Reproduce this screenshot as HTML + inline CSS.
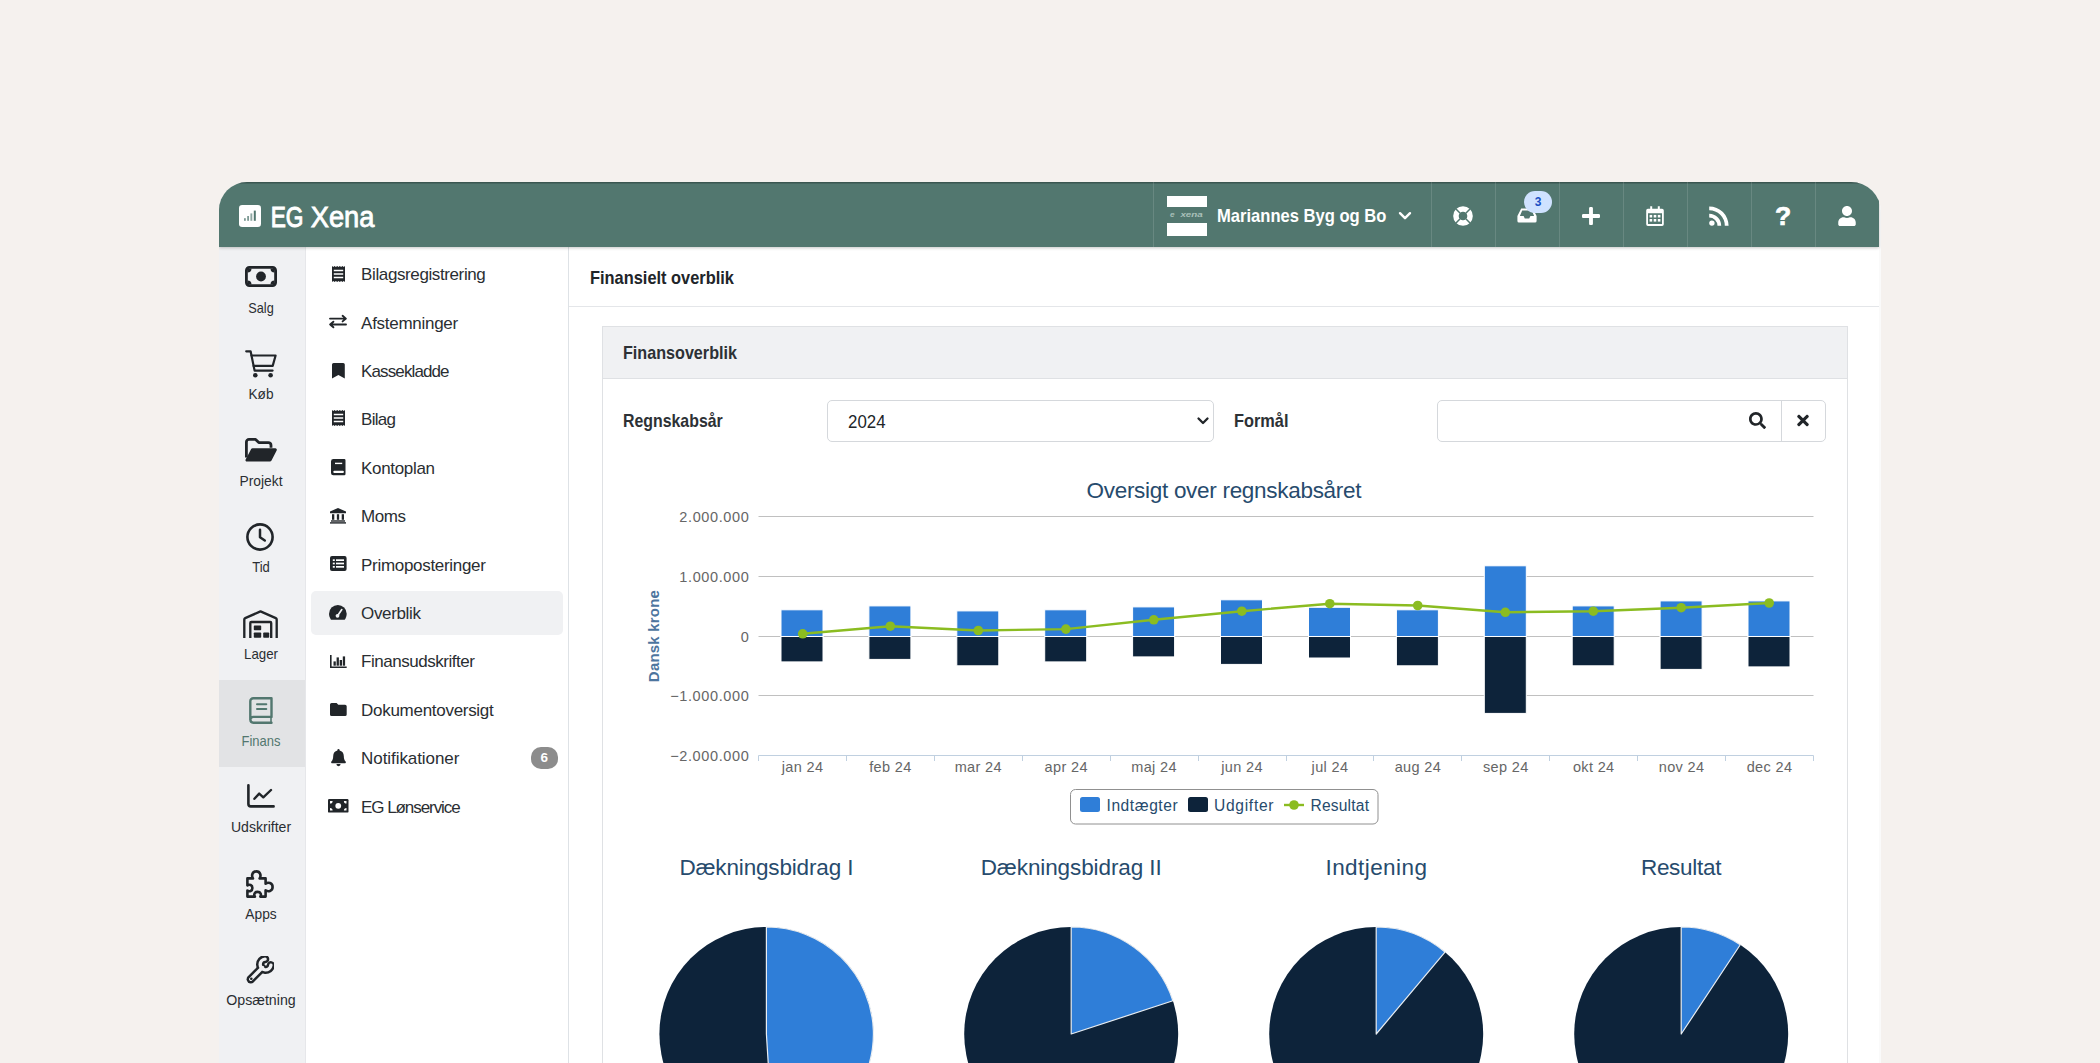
<!DOCTYPE html>
<html lang="da">
<head>
<meta charset="utf-8">
<title>EG Xena - Finansielt overblik</title>
<style>
*{box-sizing:border-box;margin:0;padding:0}
html,body{width:2100px;height:1063px;overflow:hidden}
body{background:#f5f1ee;font-family:"Liberation Sans",sans-serif;color:#212529;position:relative}
.abs{position:absolute}
#win{position:absolute;left:219px;top:182px;width:1662px;height:900px;background:#fff;border-radius:28px 30px 0 0;overflow:hidden}
#hdr{position:absolute;left:0;top:0;width:1660px;height:65px;background:#52776f;box-shadow:0 1px 3px rgba(0,0,0,.22), inset 0 1.500px 0 rgba(20,35,32,.38);z-index:5}
#strip{position:absolute;left:1660px;top:0;width:2px;height:900px;background:#fafafa}
.sep{position:absolute;top:0;width:1px;height:65px;background:rgba(255,255,255,.13)}
.hico{position:absolute;fill:#fff}
#side{position:absolute;left:0;top:65px;width:85.500px;height:840px;background:#f0f1f3}
.sitem{position:absolute;left:-.8px;width:86.500px;height:87px;text-align:center}
.sitem .lbl{position:absolute;left:-10px;width:106px;top:52.600px;font-size:14.800px;line-height:17px;color:#2a2e32;text-align:center}
.sitem svg{position:absolute}
.sitem.act{background:#e2e3e5}
.sitem.act .lbl{color:#52776f}
#sub{position:absolute;left:85.500px;top:65px;width:264.500px;height:840px;background:#fff;border-right:1px solid #dee2e6;border-left:1.500px solid #e6e7ea}
.mi{position:absolute;left:0;width:262px;height:44px}
.mi .t{position:absolute;left:55.600px;top:13.250px;font-size:17px;letter-spacing:-.4px;line-height:20px;white-space:nowrap;color:#2a2e32}
.mi svg{position:absolute;overflow:visible}
#main{position:absolute;left:350px;top:65px;width:1310px;height:840px;background:#fff}
.b{font-weight:700;color:#2d3135}
</style>
</head>
<body>
<div id="win">
  <div id="strip"></div>
  <div id="side">
<div class="sitem" style="top:0.0px"><svg style="left:26.5px;top:19px" width="32" height="21" viewBox="0 0 32 21"><rect x="1.400" y="1.400" width="29.200" height="18.200" rx="3" fill="none" stroke="#212529" stroke-width="2.800"/><circle cx="16" cy="10.5" r="4.9" fill="#212529"/><path d="M2.500 2.500 h4 a4 4 0 0 1 -4 4 z M29.500 2.500 h-4 a4 4 0 0 0 4 4 z M2.500 18.500 h4 a4 4 0 0 0 -4 -4 z M29.500 18.500 h-4 a4 4 0 0 1 4 -4 z" fill="#212529"/></svg><div class="lbl" style="transform:scaleX(0.859)">Salg</div></div>
<div class="sitem" style="top:86.6px"><svg style="left:26.500px;top:16.400px" width="32" height="28" viewBox="0 0 32 28"><g fill="none" stroke="#212529" stroke-width="2.200" stroke-linecap="round" stroke-linejoin="round"><path d="M1.200 1.300 H5.600 L9.600 20.600 H27.600"/><path d="M6.500 5.500 H30.600 L27.700 15.900 H8.600"/></g><circle cx="10.300" cy="25.200" r="2.300" fill="#212529"/><circle cx="25.600" cy="25.200" r="2.300" fill="#212529"/></svg><div class="lbl" style="transform:scaleX(0.922)">Køb</div></div>
<div class="sitem" style="top:173.2px"><svg style="left:26.500px;top:17.800px" width="32" height="24" viewBox="0 0 32 24"><path d="M1.400 19.500 V4 a2.600 2.600 0 0 1 2.600 -2.600 h6.600 l3.200 3.200 h9.600 a2.600 2.600 0 0 1 2.600 2.600 v2.600" fill="none" stroke="#212529" stroke-width="2.800" stroke-linejoin="round"/><path d="M7.800 10.300 H30.300 a1.500 1.500 0 0 1 1.350 2.200 L26.500 22.600 a1.800 1.800 0 0 1 -1.600 1 H2 a1.500 1.500 0 0 1 -1.350 -2.200 L5.900 11.400 a2 2 0 0 1 1.900 -1.100 z" fill="#212529"/></svg><div class="lbl" style="transform:scaleX(0.934)">Projekt</div></div>
<div class="sitem" style="top:259.8px"><svg style="left:28px;top:16px" width="28" height="28" viewBox="0 0 28 28"><circle cx="14" cy="14" r="12.600" fill="none" stroke="#212529" stroke-width="2.600"/><path d="M14 6.800 V14.300 L18.800 17.500" fill="none" stroke="#212529" stroke-width="2.500" stroke-linecap="round" stroke-linejoin="round"/></svg><div class="lbl" style="transform:scaleX(0.881)">Tid</div></div>
<div class="sitem" style="top:346.4px"><svg style="left:24.500px;top:16.200px" width="35" height="28" viewBox="0 0 35 28"><g fill="none" stroke="#212529" stroke-width="2.350" stroke-linejoin="round"><path d="M1.300 28 V9.500 a1.500 1.500 0 0 1 .9 -1.400 L17.500 1.400 L32.800 8.100 a1.500 1.500 0 0 1 .9 1.400 V28"/><path d="M7.300 28 V13 a1 1 0 0 1 1 -1 H27.200 a1 1 0 0 1 1 1 V28"/></g><g fill="#212529"><rect x="10.800" y="15.600" width="7.400" height="4.600" rx=".8"/><rect x="10.800" y="22.500" width="7.400" height="5.200" rx=".8"/><rect x="20.200" y="22.500" width="6" height="5.200" rx=".8"/></g></svg><div class="lbl" style="transform:scaleX(0.898)">Lager</div></div>
<div class="sitem act" style="top:433.0px"><svg style="left:30.400px;top:16.600px" width="24" height="27" viewBox="0 0 24 27"><g fill="none" stroke="#52776f" stroke-width="2.400" stroke-linejoin="round" stroke-linecap="round"><path d="M1.300 22.700 V4.300 a3 3 0 0 1 3 -3 H22.500 V19.900 H4.300 a2.900 2.900 0 0 0 0 5.800 H22.500"/><path d="M22 20 V25" stroke-width="1.600"/></g><g stroke="#52776f" stroke-width="2" stroke-linecap="round"><path d="M8 7.300 H17.300 M8 11.900 H17.300"/></g></svg><div class="lbl" style="transform:scaleX(0.878)">Finans</div></div>
<div class="sitem" style="top:519.6px"><svg style="left:28.400px;top:17.700px" width="28" height="24" viewBox="0 0 28 24"><g fill="none" stroke="#212529" stroke-linecap="round" stroke-linejoin="round"><path d="M1.400 1.300 V20 a2.400 2.400 0 0 0 2.400 2.400 H26.600" stroke-width="2.600"/><path d="M7.400 14.800 L12.200 9.600 L16.300 13.300 L24 6" stroke-width="2.400"/></g></svg><div class="lbl" style="transform:scaleX(0.95)">Udskrifter</div></div>
<div class="sitem" style="top:606.2px"><svg style="left:28px;top:16.700px" width="28" height="28" viewBox="0 0 28 28"><path d="M1.400 8.400 H7 C5.300 6 6 1.400 10.300 1.400 C14.600 1.400 15.300 6 13.600 8.400 H19.600 V13.700 C22 12 26.600 12.700 26.600 17 C26.600 21.300 22 22 19.600 20.300 V26.600 H14.300 C15.600 24.600 14.800 21.900 11.600 21.900 C8.400 21.900 7.600 24.600 8.900 26.600 H1.400 V20.600 C3.400 21.900 6.400 21.100 6.400 18 C6.400 14.900 3.400 14.100 1.400 15.400 Z" fill="none" stroke="#212529" stroke-width="2.600" stroke-linejoin="round"/></svg><div class="lbl" style="transform:scaleX(0.931)">Apps</div></div>
<div class="sitem" style="top:692.8px"><svg style="left:28px;top:16.500px" width="28" height="28" viewBox="0 0 28 28"><g fill="none" stroke-linecap="round" stroke-linejoin="round"><path d="M24.900 9.300 A5.400 5.400 0 1 1 19.100 3.100" stroke="#212529" stroke-width="8.400"/><path d="M16 12 L4.800 23.200" stroke="#212529" stroke-width="8.400"/><path d="M24.900 9.300 A5.400 5.400 0 1 1 19.100 3.100" stroke="#f0f1f3" stroke-width="3.400"/><path d="M16.500 11.500 L4.800 23.200" stroke="#f0f1f3" stroke-width="3.400"/></g><circle cx="5.300" cy="22.700" r="1.300" fill="#212529"/></svg><div class="lbl" style="transform:scaleX(0.959)">Opsætning</div></div>
</div>
  <div id="sub">
<div class="abs" style="left:5px;top:344px;width:252px;height:44px;background:#f0f1f3;border-radius:5px"></div>
<div class="mi" style="top:5.0px"><svg style="left:26.2px;top:14.4px;width:13px;height:16px" viewBox="0 0 13 16"><path d="M0 0 L0.0 0 L1.3 1.1 L2.6 0 L3.9 1.1 L5.2 0 L6.5 1.1 L7.8 0 L9.1 1.1 L10.4 0 L11.7 1.1 L13 0 L13 16 L11.7 14.9 L10.4 16 L9.1 14.9 L7.8 16 L6.5 14.9 L5.2 16 L3.9 14.9 L2.6 16 L1.3 14.9 L0.0 16 Z" fill="#212529"/><path d="M1.800 4.600 H11.200 M1.800 8 H11.200 M1.800 11.400 H11.200" stroke="#fff" stroke-width="1.500"/></svg><div class="t" style="letter-spacing:-0.39px">Bilagsregistrering</div></div>
<div class="mi" style="top:53.4px"><svg style="left:23.5px;top:15.1px;width:18px;height:13px" viewBox="0 0 18 13"><g fill="none" stroke="#212529" stroke-width="1.900" stroke-linecap="round" stroke-linejoin="round"><path d="M1 3.600 H16.800 M13.600 0.800 L16.900 3.600 L13.600 6.400"/><path d="M17 9.500 H1.200 M4.400 6.700 L1.100 9.500 L4.400 12.300"/></g></svg><div class="t" style="letter-spacing:-0.28px">Afstemninger</div></div>
<div class="mi" style="top:101.8px"><svg style="left:26.3px;top:13.9px;width:12.8px;height:15.6px" viewBox="0 0 12.8 15.6"><path d="M0 1.600 a1.600 1.600 0 0 1 1.600 -1.600 h9.600 a1.600 1.600 0 0 1 1.600 1.600 V15.600 L6.400 11.900 L0 15.600 Z" fill="#212529"/></svg><div class="t" style="letter-spacing:-0.89px">Kassekladde</div></div>
<div class="mi" style="top:150.2px"><svg style="left:26.2px;top:12.8px;width:13px;height:16px" viewBox="0 0 13 16"><path d="M0 0 L0.0 0 L1.3 1.1 L2.6 0 L3.9 1.1 L5.2 0 L6.5 1.1 L7.8 0 L9.1 1.1 L10.4 0 L11.7 1.1 L13 0 L13 16 L11.7 14.9 L10.4 16 L9.1 14.9 L7.8 16 L6.5 14.9 L5.2 16 L3.9 14.9 L2.6 16 L1.3 14.9 L0.0 16 Z" fill="#212529"/><path d="M1.800 4.600 H11.200 M1.800 8 H11.200 M1.800 11.400 H11.200" stroke="#fff" stroke-width="1.500"/></svg><div class="t" style="letter-spacing:-0.74px">Bilag</div></div>
<div class="mi" style="top:198.6px"><svg style="left:25.5px;top:13.4px;width:14.5px;height:16.3px" viewBox="0 0 14.5 16.3"><path d="M0 2.400 a2.400 2.400 0 0 1 2.400 -2.400 H13.300 a1.200 1.200 0 0 1 1.200 1.200 V15.100 a1.200 1.200 0 0 1 -1.200 1.200 H2.400 a2.400 2.400 0 0 1 -2.400 -2.400 Z" fill="#212529"/><rect x="4" y="3.700" width="7.200" height="1.400" fill="#fff"/><rect x="2.300" y="11.700" width="10.600" height="2.300" rx="1" fill="#fff"/></svg><div class="t" style="letter-spacing:-0.33px">Kontoplan</div></div>
<div class="mi" style="top:247.0px"><svg style="left:24.4px;top:14.0px;width:16px;height:15.6px" viewBox="0 0 16 15.6"><path d="M8 0 L16 3.500 V5.200 H0 V3.500 Z" fill="#212529"/><g fill="#212529"><rect x="2" y="6.200" width="2.300" height="5.600"/><rect x="6.850" y="6.200" width="2.300" height="5.600"/><rect x="11.700" y="6.200" width="2.300" height="5.600"/><rect x="1" y="12.300" width="14" height="1.400"/><rect x="0" y="14.200" width="16" height="1.400"/></g></svg><div class="t" style="letter-spacing:-0.45px">Moms</div></div>
<div class="mi" style="top:295.4px"><svg style="left:24px;top:13.4px;width:16.6px;height:15px" viewBox="0 0 16.6 15"><rect x="0" y="0" width="16.600" height="15" rx="2" fill="#212529"/><g fill="#fff"><rect x="2.800" y="3.300" width="2" height="1.700"/><rect x="6" y="3.300" width="8" height="1.700"/><rect x="2.800" y="6.650" width="2" height="1.700"/><rect x="6" y="6.650" width="8" height="1.700"/><rect x="2.800" y="10" width="2" height="1.700"/><rect x="6" y="10" width="8" height="1.700"/></g></svg><div class="t" style="letter-spacing:-0.31px">Primoposteringer</div></div>
<div class="mi" style="top:343.8px"><svg style="left:23.6px;top:14.2px;width:17.7px;height:14.7px" viewBox="0 0 17.7 14.7"><path d="M0 8.850 a8.850 8.850 0 0 1 17.700 0 c0 2.100 -0.700 4.100 -1.800 5.600 a0.800 0.800 0 0 1 -0.600 0.300 H2.400 a0.800 0.800 0 0 1 -0.600 -0.300 C0.700 12.900 0 10.900 0 8.850 Z" fill="#212529"/><path d="M8.600 10.700 L12.800 4.600" stroke="#f0f1f3" stroke-width="1.700" stroke-linecap="round"/><circle cx="8.500" cy="10.800" r="1.900" fill="#f0f1f3"/></svg><div class="t" style="letter-spacing:-0.36px">Overblik</div></div>
<div class="mi" style="top:392.2px"><svg style="left:24px;top:15.4px;width:16.7px;height:13px" viewBox="0 0 16.7 13"><path d="M0.800 0 V12.200 H16.700" fill="none" stroke="#212529" stroke-width="1.600"/><g fill="#212529"><rect x="3.500" y="6.400" width="2.300" height="4.300"/><rect x="6.600" y="2.400" width="2.300" height="8.300"/><rect x="9.700" y="5" width="2.300" height="5.700"/><rect x="12.800" y="1.400" width="2.300" height="9.300"/></g></svg><div class="t" style="letter-spacing:-0.48px">Finansudskrifter</div></div>
<div class="mi" style="top:440.6px"><svg style="left:24px;top:15.4px;width:16.7px;height:13px" viewBox="0 0 16.7 13"><path d="M0 1.600 a1.600 1.600 0 0 1 1.600 -1.600 h5 l1.700 1.700 h6.800 a1.600 1.600 0 0 1 1.600 1.600 v8.100 a1.600 1.600 0 0 1 -1.600 1.600 h-13.500 a1.600 1.600 0 0 1 -1.600 -1.600 Z" fill="#212529"/></svg><div class="t" style="letter-spacing:-0.29px">Dokumentoversigt</div></div>
<div class="mi" style="top:489.0px"><svg style="left:25px;top:12.8px;width:15px;height:17.2px" viewBox="0 0 15 17.2"><path d="M7.500 0 a1.100 1.100 0 0 1 1.100 1.100 v0.500 c2.500 0.500 4.200 2.700 4.200 5.300 c0 3.200 0.900 4.600 1.800 5.600 c0.600 0.700 0.100 1.800 -0.800 1.800 H1.200 c-0.900 0 -1.400 -1.100 -0.800 -1.800 c0.900 -1 1.800 -2.400 1.800 -5.600 c0 -2.600 1.700 -4.800 4.200 -5.300 v-0.500 A1.100 1.100 0 0 1 7.500 0 Z M5.400 15.100 h4.200 a2.100 2.100 0 0 1 -4.200 0 Z" fill="#212529"/></svg><div class="t" style="letter-spacing:-0.07px">Notifikationer</div></div>
<div class="mi" style="top:537.4px"><svg style="left:22.2px;top:14.9px;width:20.5px;height:13.6px" viewBox="0 0 20.5 13.6"><rect x="0" y="0" width="20.500" height="13.600" rx="1.200" fill="#212529"/><circle cx="10.250" cy="6.800" r="2.900" fill="#fff"/><path d="M2 2 h2.600 a2.600 2.600 0 0 1 -2.600 2.600 z M18.500 2 h-2.600 a2.600 2.600 0 0 0 2.600 2.600 z M2 11.600 h2.600 a2.600 2.600 0 0 0 -2.600 -2.600 z M18.500 11.600 h-2.600 a2.600 2.600 0 0 1 2.600 -2.600 z" fill="#fff"/></svg><div class="t" style="letter-spacing:-1.07px">EG Lønservice</div></div>
<div class="abs b" style="left:225.500px;top:500px;width:26.500px;height:22.400px;border-radius:10px;background:#8c8c8c;color:#fff;font-size:13.500px;line-height:22.400px;text-align:center">6</div>
</div>
  <div id="main">
<div class="abs b" style="left:20.500px;top:20px;font-size:17.800px;line-height:22px;white-space:nowrap;color:#212529;transform:scaleX(0.922);transform-origin:0 50%">Finansielt overblik</div>
<div class="abs" style="left:0;top:59px;width:1310px;height:1px;background:#e4e6e9"></div>
<div class="abs" style="left:33px;top:79px;width:1245.500px;height:800px;border:1px solid #dfe1e4;background:#fff"></div>
<div class="abs" style="left:34px;top:80px;width:1243.500px;height:52px;background:#f0f1f3;border-bottom:1px solid #dfe1e4"></div>
<div class="abs b" style="left:54px;top:95px;font-size:17.800px;line-height:22px;white-space:nowrap;transform:scaleX(0.908);transform-origin:0 50%">Finansoverblik</div>
<div class="abs b" style="left:54px;top:163px;font-size:17.800px;line-height:22px;white-space:nowrap;transform:scaleX(0.893);transform-origin:0 50%">Regnskabsår</div>
<div class="abs" style="left:258px;top:152.500px;width:387px;height:42px;border:1px solid #d5d8dc;border-radius:5px;background:#fff"></div>
<div class="abs" style="left:278.5px;top:164px;font-size:18px;line-height:22px;color:#212529;transform:scaleX(.937);transform-origin:0 50%">2024</div>
<svg class="abs" style="left:627px;top:168px" width="14" height="12" viewBox="0 0 14 12"><path d="M2.500 3.500 L7 8 L11.500 3.500" fill="none" stroke="#212529" stroke-width="2.300" stroke-linecap="round" stroke-linejoin="round"/></svg>
<div class="abs b" style="left:664.5px;top:163px;font-size:17.800px;line-height:22px;white-space:nowrap;transform:scaleX(0.919);transform-origin:0 50%">Formål</div>
<div class="abs" style="left:868px;top:152.5px;width:389px;height:42px;border:1px solid #d5d8dc;border-radius:5px;background:#fff"></div>
<div class="abs" style="left:1212px;top:153px;width:1px;height:41px;background:#d5d8dc"></div>
<svg class="abs" style="left:1180px;top:164.5px" width="17" height="17" viewBox="0 0 512 512"><path d="M505 442.700L405.300 343c-4.500-4.500-10.600-7-17-7H372c27.600-35.300 44-79.700 44-128C416 93.100 322.900 0 208 0S0 93.100 0 208s93.100 208 208 208c48.300 0 92.700-16.400 128-44v16.300c0 6.400 2.500 12.500 7 17l99.700 99.700c9.400 9.400 24.600 9.400 33.900 0l28.300-28.300c9.400-9.400 9.400-24.600.1-34zM208 336c-70.700 0-128-57.200-128-128 0-70.700 57.200-128 128-128 70.700 0 128 57.200 128 128 0 70.700-57.200 128-128 128z" fill="#212529"/></svg>
<svg class="abs" style="left:1228px;top:164.5px" width="12" height="17" viewBox="0 0 352 512"><path d="M242.720 256l100.070-100.070c12.280-12.280 12.280-32.190 0-44.480l-22.240-22.240c-12.280-12.280-32.190-12.280-44.480 0L176 189.280 75.930 89.210c-12.280-12.280-32.190-12.280-44.480 0L9.210 111.450c-12.280 12.280-12.280 32.190 0 44.480L109.280 256 9.210 356.070c-12.280 12.280-12.280 32.190 0 44.480l22.240 22.240c12.280 12.280 32.200 12.280 44.480 0L176 322.720l100.070 100.070c12.280 12.280 32.200 12.280 44.480 0l22.240-22.240c12.280-12.280 12.280-32.190 0-44.480L242.720 256z" fill="#212529"/></svg>
<svg class="abs" style="left:0;top:0" width="1310" height="840" viewBox="569 247 1310 840" font-family="Liberation Sans, sans-serif">
<text x="1224" y="498" text-anchor="middle" font-size="22.500" fill="#274b6d" textLength="275" lengthAdjust="spacing">Oversigt over regnskabsåret</text>
<path d="M758.5 516.5 H1813.5" stroke="#c0c0c0" stroke-width="1"/>
<path d="M758.5 576.5 H1813.5" stroke="#c0c0c0" stroke-width="1"/>
<path d="M758.5 636.5 H1813.5" stroke="#c0c0c0" stroke-width="1"/>
<path d="M758.5 695.5 H1813.5" stroke="#c0c0c0" stroke-width="1"/>
<text x="749.400" y="521.5" text-anchor="end" font-size="14.500" fill="#666" letter-spacing=".62">2.000.000</text>
<text x="749.400" y="581.5" text-anchor="end" font-size="14.500" fill="#666" letter-spacing=".62">1.000.000</text>
<text x="749.400" y="641.5" text-anchor="end" font-size="14.500" fill="#666" letter-spacing=".62">0</text>
<text x="749.400" y="700.5" text-anchor="end" font-size="14.500" fill="#666" letter-spacing=".62">−1.000.000</text>
<text x="749.400" y="760.5" text-anchor="end" font-size="14.500" fill="#666" letter-spacing=".62">−2.000.000</text>
<text transform="translate(659,636) rotate(-90)" text-anchor="middle" font-size="15" font-weight="700" fill="#4d759e" letter-spacing=".2">Dansk krone</text>
<rect x="781.0" y="609.8" width="42" height="26.7" fill="#2f7ed8" stroke="#fff" stroke-width="1"/><rect x="781.0" y="636.5" width="42" height="25.4" fill="#0d233a" stroke="#fff" stroke-width="1"/>
<rect x="868.9" y="605.9" width="42" height="30.6" fill="#2f7ed8" stroke="#fff" stroke-width="1"/><rect x="868.9" y="636.5" width="42" height="22.9" fill="#0d233a" stroke="#fff" stroke-width="1"/>
<rect x="956.8" y="610.9" width="42" height="25.6" fill="#2f7ed8" stroke="#fff" stroke-width="1"/><rect x="956.8" y="636.5" width="42" height="29.3" fill="#0d233a" stroke="#fff" stroke-width="1"/>
<rect x="1044.7" y="609.8" width="42" height="26.7" fill="#2f7ed8" stroke="#fff" stroke-width="1"/><rect x="1044.7" y="636.5" width="42" height="25.4" fill="#0d233a" stroke="#fff" stroke-width="1"/>
<rect x="1132.6" y="606.9" width="42" height="29.6" fill="#2f7ed8" stroke="#fff" stroke-width="1"/><rect x="1132.6" y="636.5" width="42" height="20.4" fill="#0d233a" stroke="#fff" stroke-width="1"/>
<rect x="1220.5" y="599.8" width="42" height="36.7" fill="#2f7ed8" stroke="#fff" stroke-width="1"/><rect x="1220.5" y="636.5" width="42" height="27.9" fill="#0d233a" stroke="#fff" stroke-width="1"/>
<rect x="1308.5" y="607.3" width="42" height="29.2" fill="#2f7ed8" stroke="#fff" stroke-width="1"/><rect x="1308.5" y="636.5" width="42" height="21.5" fill="#0d233a" stroke="#fff" stroke-width="1"/>
<rect x="1396.4" y="609.8" width="42" height="26.7" fill="#2f7ed8" stroke="#fff" stroke-width="1"/><rect x="1396.4" y="636.5" width="42" height="29.3" fill="#0d233a" stroke="#fff" stroke-width="1"/>
<rect x="1484.3" y="565.8" width="42" height="70.7" fill="#2f7ed8" stroke="#fff" stroke-width="1"/><rect x="1484.3" y="636.5" width="42" height="76.9" fill="#0d233a" stroke="#fff" stroke-width="1"/>
<rect x="1572.2" y="605.9" width="42" height="30.6" fill="#2f7ed8" stroke="#fff" stroke-width="1"/><rect x="1572.2" y="636.5" width="42" height="29.3" fill="#0d233a" stroke="#fff" stroke-width="1"/>
<rect x="1660.1" y="600.9" width="42" height="35.6" fill="#2f7ed8" stroke="#fff" stroke-width="1"/><rect x="1660.1" y="636.5" width="42" height="32.9" fill="#0d233a" stroke="#fff" stroke-width="1"/>
<rect x="1748.0" y="600.9" width="42" height="35.6" fill="#2f7ed8" stroke="#fff" stroke-width="1"/><rect x="1748.0" y="636.5" width="42" height="30.4" fill="#0d233a" stroke="#fff" stroke-width="1"/>
<path d="M758.5 755.500 H1813.5" stroke="#c0d0e0" stroke-width="1"/>
<path d="M758.5 755.500 V761" stroke="#c0d0e0" stroke-width="1"/><path d="M846.5 755.500 V761" stroke="#c0d0e0" stroke-width="1"/><path d="M934.5 755.500 V761" stroke="#c0d0e0" stroke-width="1"/><path d="M1022.5 755.500 V761" stroke="#c0d0e0" stroke-width="1"/><path d="M1110.5 755.500 V761" stroke="#c0d0e0" stroke-width="1"/><path d="M1198.5 755.500 V761" stroke="#c0d0e0" stroke-width="1"/><path d="M1286.5 755.500 V761" stroke="#c0d0e0" stroke-width="1"/><path d="M1373.5 755.500 V761" stroke="#c0d0e0" stroke-width="1"/><path d="M1461.5 755.500 V761" stroke="#c0d0e0" stroke-width="1"/><path d="M1549.5 755.500 V761" stroke="#c0d0e0" stroke-width="1"/><path d="M1637.5 755.500 V761" stroke="#c0d0e0" stroke-width="1"/><path d="M1725.5 755.500 V761" stroke="#c0d0e0" stroke-width="1"/><path d="M1813.5 755.500 V761" stroke="#c0d0e0" stroke-width="1"/>
<text x="802.5" y="772" text-anchor="middle" font-size="14.500" fill="#666" letter-spacing=".35">jan 24</text><text x="890.4" y="772" text-anchor="middle" font-size="14.500" fill="#666" letter-spacing=".35">feb 24</text><text x="978.3" y="772" text-anchor="middle" font-size="14.500" fill="#666" letter-spacing=".35">mar 24</text><text x="1066.2" y="772" text-anchor="middle" font-size="14.500" fill="#666" letter-spacing=".35">apr 24</text><text x="1154.1" y="772" text-anchor="middle" font-size="14.500" fill="#666" letter-spacing=".35">maj 24</text><text x="1242.0" y="772" text-anchor="middle" font-size="14.500" fill="#666" letter-spacing=".35">jun 24</text><text x="1330.0" y="772" text-anchor="middle" font-size="14.500" fill="#666" letter-spacing=".35">jul 24</text><text x="1417.9" y="772" text-anchor="middle" font-size="14.500" fill="#666" letter-spacing=".35">aug 24</text><text x="1505.8" y="772" text-anchor="middle" font-size="14.500" fill="#666" letter-spacing=".35">sep 24</text><text x="1593.7" y="772" text-anchor="middle" font-size="14.500" fill="#666" letter-spacing=".35">okt 24</text><text x="1681.6" y="772" text-anchor="middle" font-size="14.500" fill="#666" letter-spacing=".35">nov 24</text><text x="1769.5" y="772" text-anchor="middle" font-size="14.500" fill="#666" letter-spacing=".35">dec 24</text>
<path d="M802.7 633.8 L890.3 626.2 L978.3 630.5 L1065.9 629.1 L1153.8 619.8 L1241.8 611.2 L1329.8 603.7 L1417.7 605.5 L1505.3 612.3 L1593.3 611.2 L1681.2 607.7 L1769.2 603" fill="none" stroke="#8bbc21" stroke-width="2.400" stroke-linejoin="round"/>
<circle cx="802.7" cy="633.8" r="4.800" fill="#8bbc21"/><circle cx="890.3" cy="626.2" r="4.800" fill="#8bbc21"/><circle cx="978.3" cy="630.5" r="4.800" fill="#8bbc21"/><circle cx="1065.9" cy="629.1" r="4.800" fill="#8bbc21"/><circle cx="1153.8" cy="619.8" r="4.800" fill="#8bbc21"/><circle cx="1241.8" cy="611.2" r="4.800" fill="#8bbc21"/><circle cx="1329.8" cy="603.7" r="4.800" fill="#8bbc21"/><circle cx="1417.7" cy="605.5" r="4.800" fill="#8bbc21"/><circle cx="1505.3" cy="612.3" r="4.800" fill="#8bbc21"/><circle cx="1593.3" cy="611.2" r="4.800" fill="#8bbc21"/><circle cx="1681.2" cy="607.7" r="4.800" fill="#8bbc21"/><circle cx="1769.2" cy="603" r="4.800" fill="#8bbc21"/>
<rect x="1070.500" y="789.500" width="307.500" height="34.500" rx="5" fill="#fff" stroke="#909090" stroke-width="1"/>
<rect x="1080" y="797" width="20" height="15" rx="2.500" fill="#2f7ed8"/><text x="1106.500" y="811" font-size="15.600" fill="#274b6d" letter-spacing=".55">Indtægter</text>
<rect x="1188" y="797" width="20" height="15" rx="2.500" fill="#0d233a"/><text x="1214" y="811" font-size="15.600" fill="#274b6d" letter-spacing=".7">Udgifter</text>
<path d="M1284 805 H1304" stroke="#8bbc21" stroke-width="2.400"/><circle cx="1294" cy="805" r="4.800" fill="#8bbc21"/><text x="1310.500" y="811" font-size="15.600" fill="#274b6d" letter-spacing=".18">Resultat</text>
<text x="766.4" y="874.500" text-anchor="middle" font-size="22.500" fill="#274b6d" textLength="174" lengthAdjust="spacing">Dækningsbidrag I</text><circle cx="766.4" cy="1034" r="107" fill="#0d233a"/><path d="M766.4 1034 L766.4 927 A107 107 0 0 1 773.12 1140.79 Z" fill="#2f7ed8" stroke="#e8edf2" stroke-width="1.200" stroke-linejoin="round"/>
<text x="1071.2" y="874.500" text-anchor="middle" font-size="22.500" fill="#274b6d" textLength="181" lengthAdjust="spacing">Dækningsbidrag II</text><circle cx="1071.2" cy="1034" r="107" fill="#0d233a"/><path d="M1071.2 1034 L1071.2 927 A107 107 0 0 1 1172.91 1000.76 Z" fill="#2f7ed8" stroke="#e8edf2" stroke-width="1.200" stroke-linejoin="round"/>
<text x="1376.2" y="874.500" text-anchor="middle" font-size="22.500" fill="#274b6d" textLength="101.500" lengthAdjust="spacing">Indtjening</text><circle cx="1376.2" cy="1034" r="107" fill="#0d233a"/><path d="M1376.2 1034 L1376.2 927 A107 107 0 0 1 1444.98 952.03 Z" fill="#2f7ed8" stroke="#e8edf2" stroke-width="1.200" stroke-linejoin="round"/>
<text x="1681.2" y="874.500" text-anchor="middle" font-size="22.500" fill="#274b6d" textLength="80.500" lengthAdjust="spacing">Resultat</text><circle cx="1681.2" cy="1034" r="107" fill="#0d233a"/><path d="M1681.2 1034 L1681.2 927 A107 107 0 0 1 1740.26 944.77 Z" fill="#2f7ed8" stroke="#e8edf2" stroke-width="1.200" stroke-linejoin="round"/>
</svg>
</div>
  <div id="hdr">
    <!-- logo mark -->
    <svg class="abs" style="left:20px;top:23px" width="22" height="22" viewBox="0 0 22 22"><rect x="0" y="0" width="22" height="22" rx="3.2" fill="#fff"/><rect x="5" y="13.2" width="1.8" height="2.6" fill="#7d9a94"/><rect x="8.2" y="11" width="1.8" height="4.8" fill="#7d9a94"/><rect x="11.4" y="8.4" width="1.9" height="7.4" fill="#8fa8a3"/><rect x="14.8" y="5.6" width="2" height="10.2" fill="#52776f"/></svg>
    <svg class="abs" style="left:50px;top:14px" width="120" height="40" viewBox="0 0 120 40" font-family="Liberation Sans, sans-serif" font-size="30.200" fill="#fff" stroke="#fff"><text x="1.700" y="30.600" textLength="32.800" lengthAdjust="spacingAndGlyphs" stroke-width="1.050">EG</text><text x="41.700" y="30.600" textLength="63.800" lengthAdjust="spacingAndGlyphs" stroke-width="0.850">Xena</text></svg>
    <div class="sep" style="left:933.5px"></div>
    <!-- company logo -->
    <div class="abs" style="left:948px;top:14px;width:40px;height:11px;background:#fff"></div>
    <div class="abs" style="left:948px;top:41px;width:40px;height:13px;background:#fff"></div>
    <svg class="abs" style="left:948px;top:27px" width="40" height="12" viewBox="0 0 40 12" font-family="Liberation Sans, sans-serif" font-size="6.600" font-weight="700" font-style="italic" fill="#a9c0ba"><text x="3" y="8.100" textLength="4.600" lengthAdjust="spacingAndGlyphs">e</text><text x="13.400" y="8.100" textLength="22.400" lengthAdjust="spacingAndGlyphs">xena</text></svg>
    <div class="abs b" style="left:997.500px;top:23px;font-size:17.800px;line-height:22px;color:#fff;white-space:nowrap;transform:scaleX(0.932);transform-origin:0 50%">Mariannes Byg og Bo</div>
    <svg class="abs" style="left:1179px;top:28px" width="14" height="12" viewBox="0 0 14 12"><path d="M2 3.2 L7 8.2 L12 3.2" fill="none" stroke="#fff" stroke-width="2.4" stroke-linecap="round" stroke-linejoin="round"/></svg>
    <div class="sep" style="left:1211.5px"></div>
    <div class="sep" style="left:1275.5px"></div>
    <div class="sep" style="left:1339.5px"></div>
    <div class="sep" style="left:1403.5px"></div>
    <div class="sep" style="left:1467.5px"></div>
    <div class="sep" style="left:1531.5px"></div>
    <div class="sep" style="left:1595.5px"></div>
    <!-- life ring -->
    <svg class="abs" style="left:1234px;top:24px" width="20" height="20" viewBox="0 0 20 20"><circle cx="10" cy="10" r="9.800" fill="#fff"/><circle cx="10" cy="10" r="4.300" fill="#52776f"/><g stroke="#52776f" stroke-width="1.500"><path d="M2.500 2.500 L7.200 7.200 M17.500 2.500 L12.800 7.200 M2.500 17.500 L7.200 12.800 M17.500 17.500 L12.800 12.800"/></g></svg>
    <!-- inbox -->
    <svg class="abs" style="left:1298px;top:26px" width="20" height="15" viewBox="0 0 20 15"><path d="M4.2 0.4 H15.8 L19.6 8 V13 a1.6 1.6 0 0 1 -1.6 1.6 H2 A1.6 1.6 0 0 1 0.4 13 V8 Z M5.2 2.6 L2.9 8 H6.6 L7.8 10.4 H12.2 L13.4 8 H17.1 L14.8 2.6 Z" fill="#fff" fill-rule="evenodd"/></svg>
    <div class="abs" style="left:1305px;top:9px;width:28px;height:22px;border-radius:11px;background:#cfe2ff;color:#1a4fc4;font-size:12px;font-weight:700;line-height:22px;text-align:center">3</div>
    <!-- plus -->
    <svg class="abs" style="left:1363px;top:25px" width="18" height="18" viewBox="0 0 448 448"><path transform="translate(0,-32)" d="M416 208H272V64c0-17.67-14.33-32-32-32h-32c-17.67 0-32 14.33-32 32v144H32c-17.67 0-32 14.33-32 32v32c0 17.67 14.33 32 32 32h144v144c0 17.67 14.33 32 32 32h32c17.670 0 32-14.330 32-32V304h144c17.670 0 32-14.330 32-32v-32c0-17.670-14.330-32-32-32z" fill="#fff"/></svg>
    <!-- calendar -->
    <svg class="abs" style="left:1427px;top:24px" width="18" height="20" viewBox="0 0 18 20"><path d="M4.2 0.3 h2 v2.4 h5.6 v-2.4 h2 v2.4 h2.3 a1.7 1.7 0 0 1 1.7 1.7 v13.9 a1.7 1.7 0 0 1 -1.7 1.7 h-14.200 a1.7 1.7 0 0 1 -1.7 -1.7 v-13.900 a1.7 1.7 0 0 1 1.7 -1.700 h2.300 z M2 7.200 v10.700 h14 v-10.700 z" fill="#fff" fill-rule="evenodd"/><g fill="#fff"><rect x="3.6" y="8.9" width="2.6" height="2.6"/><rect x="7.700" y="8.900" width="2.600" height="2.600"/><rect x="11.800" y="8.900" width="2.600" height="2.600"/><rect x="3.600" y="13" width="2.600" height="2.600"/><rect x="7.700" y="13" width="2.600" height="2.600"/><rect x="11.800" y="13" width="2.600" height="2.600"/></g></svg>
    <!-- rss -->
    <svg class="abs" style="left:1490px;top:24px" width="20" height="20" viewBox="0 0 20 20"><circle cx="2.900" cy="17.100" r="2.700" fill="#fff"/><path d="M0.200 7.800 a12 12 0 0 1 12 12 h-3.700 a8.300 8.300 0 0 0 -8.300 -8.300 z" fill="#fff"/><path d="M0.200 0.400 a19.400 19.400 0 0 1 19.400 19.400 h-3.800 a15.600 15.600 0 0 0 -15.600 -15.600 z" fill="#fff"/></svg>
    <!-- question -->
    <div class="abs b" style="left:1548px;top:19px;width:32px;font-size:26.500px;line-height:30px;color:#fff;text-align:center;-webkit-text-stroke:.7px #fff">?</div>
    <!-- user -->
    <svg class="abs" style="left:1619px;top:24px" width="18" height="20" viewBox="0 0 448 512"><path d="M224 256c70.700 0 128-57.300 128-128S294.700 0 224 0 96 57.300 96 128s57.300 128 128 128zm89.600 32h-16.700c-22.200 10.200-46.900 16-72.900 16s-50.600-5.800-72.900-16h-16.700C60.200 288 0 348.200 0 422.400V464c0 26.500 21.500 48 48 48h352c26.500 0 48-21.500 48-48v-41.600c0-74.200-60.200-134.400-134.400-134.400z" fill="#fff"/></svg>
  </div>
</div>
</body>
</html>
